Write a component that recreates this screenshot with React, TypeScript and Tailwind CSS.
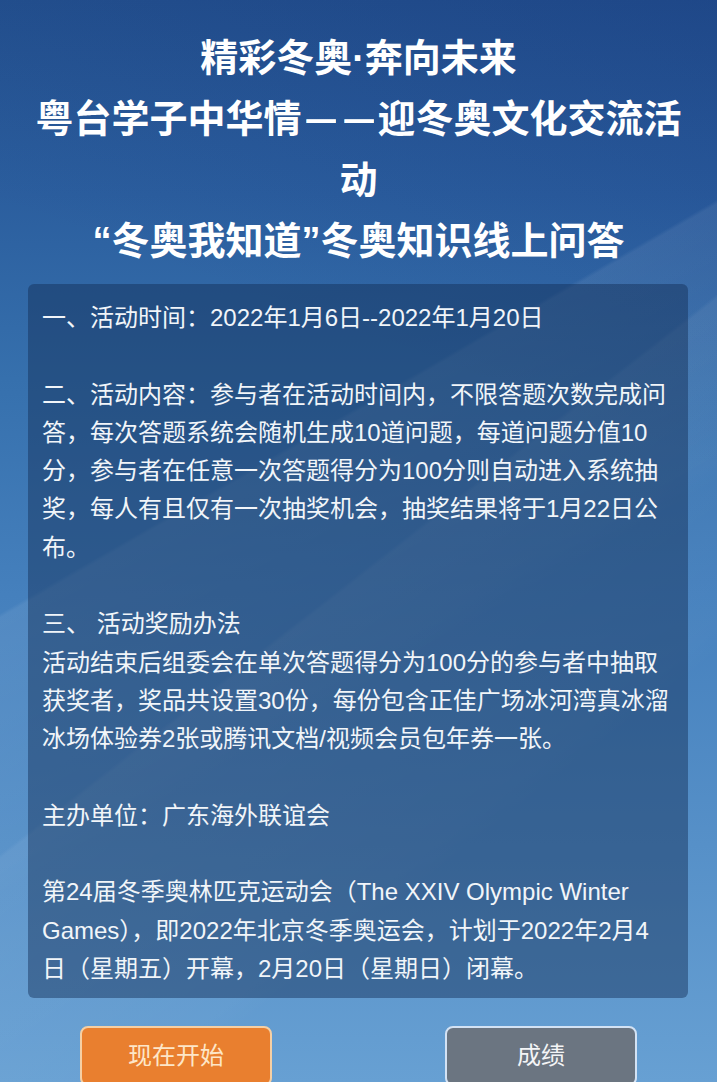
import React from 'react';

const FONT = "font-['Liberation_Sans','Noto_Sans_CJK_SC',sans-serif]";

// each inner array is one paragraph, an empty line sits between paragraphs
const paragraphs: string[][] = [
  ['一、活动时间：2022年1月6日--2022年1月20日'],
  [
    '二、活动内容：参与者在活动时间内，不限答题次数完成问',
    '答，每次答题系统会随机生成10道问题，每道问题分值10',
    '分，参与者在任意一次答题得分为100分则自动进入系统抽',
    '奖，每人有且仅有一次抽奖机会，抽奖结果将于1月22日公',
    '布。',
  ],
  [
    '三、 活动奖励办法',
    '活动结束后组委会在单次答题得分为100分的参与者中抽取',
    '获奖者，奖品共设置30份，每份包含正佳广场冰河湾真冰溜',
    '冰场体验券2张或腾讯文档/视频会员包年券一张。',
  ],
  ['主办单位：广东海外联谊会'],
  [
    '第24届冬季奥林匹克运动会（The XXIV Olympic Winter',
    'Games），即2022年北京冬季奥运会，计划于2022年2月4',
    '日（星期五）开幕，2月20日（星期日）闭幕。',
  ],
];

function Dash() {
  return <span className="inline-block scale-x-[0.78]">—</span>;
}

export default function App() {
  return (
    <div className={`${FONT} bg-white w-[717px] h-[1085px]`}>
      <div className="h-[1082px] overflow-hidden flex flex-col bg-[linear-gradient(150deg,transparent_0%,transparent_41%,rgba(255,255,255,0.07)_41.3%,rgba(255,255,255,0.02)_58%,transparent_60%),linear-gradient(142deg,transparent_0%,transparent_52%,rgba(255,255,255,0.06)_52.3%,rgba(255,255,255,0.02)_72%,transparent_74%),linear-gradient(200deg,rgba(10,30,110,0.2)_0%,transparent_35%),linear-gradient(180deg,#24528f_0%,#2b5e9e_18%,#3670ad_35%,#4580bd_55%,#5690c8_78%,#67a0d3_100%)]">
        {/* bottom edge of the cut-off banner */}
        <div className="ml-[75px] w-[567px] h-[3px] rounded-b-[3px] bg-[linear-gradient(90deg,#ffffff_0%,#d6ecf9_20%,#b9def5_55%,#d9eefa_80%,#ffffff_100%)]" />

        {/* Title */}
        <div className="mt-[28px] flex flex-col items-center text-white font-bold text-[38px] leading-[61px]">
          <div className="whitespace-nowrap">精彩冬奥·奔向未来</div>
          <div className="whitespace-nowrap">
            粤台学子中华情<Dash />
            <Dash />迎冬奥文化交流活
          </div>
          <div className="whitespace-nowrap">动</div>
          <div className="whitespace-nowrap">“冬奥我知道”冬奥知识线上问答</div>
        </div>

        {/* Rules card */}
        <div className="mt-[12px] ml-[28px] w-[660px] rounded-[6px] bg-[rgba(18,45,85,0.45)] px-[14px] pt-[15px] pb-[10px] text-[24px] leading-[38.3px] text-[#f1f5f9]">
          {paragraphs.map((para, i) => (
            <div key={i}>
              {i > 0 && <div className="h-[38.3px]" />}
              {para.map((line) => (
                <div key={line} className="whitespace-nowrap">
                  {line}
                </div>
              ))}
            </div>
          ))}
        </div>

        {/* Buttons */}
        <div className="mt-[28px] px-[80px] flex justify-between">
          <button className="w-[192px] h-[60px] rounded-[8px] border-2 border-[#f6cfa3] bg-[#e97f2f] text-[24px] text-[#fde6c8] flex items-center justify-center">
            现在开始
          </button>
          <button className="w-[192px] h-[60px] rounded-[8px] border-2 border-[#d3e2f4] bg-[#6b7581] text-[24px] text-[#f3f4f6] flex items-center justify-center">
            成绩
          </button>
        </div>
      </div>
    </div>
  );
}
